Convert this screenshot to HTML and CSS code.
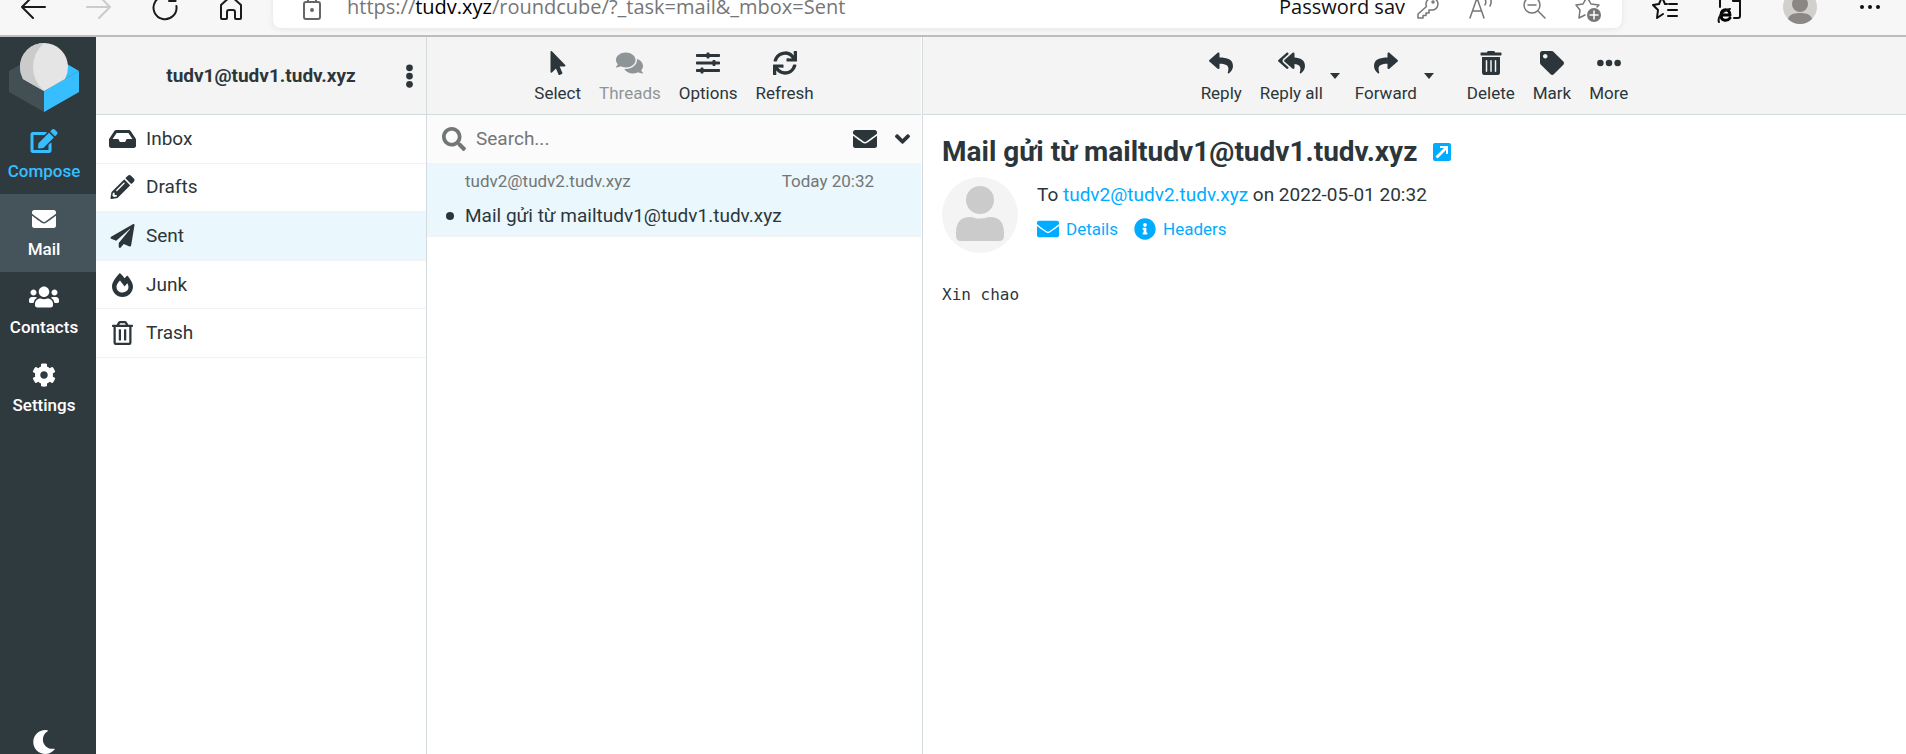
FILE: index.html
```html
<!DOCTYPE html>
<html lang="en">
<head>
<meta charset="utf-8">
<title>Mail gửi từ mailtudv1@tudv1.tudv.xyz</title>
<link rel="stylesheet" href="styles.css">
</head>
<body>
<svg class="sprite" aria-hidden="true">
  <symbol id="pointer" viewBox="0 0 320 512"><path d="M302.189 329.126H196.105l55.831 135.993c3.889 9.428-.555 19.999-9.444 23.999l-49.165 21.427c-9.165 4-19.443-.571-23.332-9.714l-53.053-129.136-86.664 89.138C18.729 472.71 0 463.554 0 447.977V18.299C0 1.899 19.921-6.096 30.277 5.443l284.412 292.542c11.472 11.179 3.007 31.141-12.5 31.141z"/></symbol>
  <symbol id="comments" viewBox="0 0 576 512"><path d="M416 192c0-88.4-93.1-160-208-160S0 103.6 0 192c0 34.3 14.1 65.9 38 92-13.4 30.2-35.5 54.2-35.8 54.5-2.2 2.3-2.8 5.7-1.5 8.7S4.8 352 8 352c36.6 0 66.9-12.3 88.7-25 32.2 15.7 70.3 25 111.3 25 114.9 0 208-71.6 208-160zm122 220c23.9-26 38-57.7 38-92 0-66.9-53.5-124.2-129.3-148.1.9 6.6 1.3 13.3 1.3 20.1 0 105.9-107.7 192-240 192-10.8 0-21.3-.8-31.7-1.9C207.8 439.6 281.8 480 368 480c41 0 79.1-9.2 111.3-25 21.8 12.7 52.1 25 88.7 25 3.2 0 6.1-1.9 7.3-4.8 1.3-2.9.7-6.3-1.5-8.7-.3-.3-22.4-24.2-35.8-54.5z"/></symbol>
  <symbol id="sliders" viewBox="0 0 512 512"><path d="M496 384H160v-16c0-8.8-7.2-16-16-16h-32c-8.800 0-16 7.200-16 16v16H16c-8.800 0-16 7.200-16 16v32c0 8.800 7.200 16 16 16h80v16c0 8.800 7.200 16 16 16h32c8.800 0 16-7.200 16-16v-16h336c8.800 0 16-7.200 16-16v-32c0-8.800-7.200-16-16-16zm0-160h-80v-16c0-8.800-7.200-16-16-16h-32c-8.800 0-16 7.200-16 16v16H16c-8.800 0-16 7.200-16 16v32c0 8.800 7.200 16 16 16h336v16c0 8.800 7.200 16 16 16h32c8.800 0 16-7.200 16-16v-16h80c8.800 0 16-7.200 16-16v-32c0-8.800-7.200-16-16-16zm0-160H288V48c0-8.800-7.200-16-16-16h-32c-8.800 0-16 7.200-16 16v16H16C7.200 64 0 71.200 0 80v32c0 8.800 7.200 16 16 16h208v16c0 8.800 7.200 16 16 16h32c8.800 0 16-7.200 16-16v-16h208c8.800 0 16-7.200 16-16V80c0-8.800-7.200-16-16-16z"/></symbol>
  <symbol id="sync" viewBox="0 0 512 512"><path d="M440.65 12.57l4 82.77A247.16 247.16 0 0 0 255.83 8C134.73 8 33.91 94.92 12.29 209.82A12 12 0 0 0 24.09 224h49.05a12 12 0 0 0 11.67-9.26 175.91 175.91 0 0 1 317-56.94l-101.46-4.86a12 12 0 0 0-12.57 12v47.41a12 12 0 0 0 12 12H500a12 12 0 0 0 12-12V12a12 12 0 0 0-12-12h-47.37a12 12 0 0 0-11.98 12.57zM255.83 432a175.61 175.61 0 0 1-146-77.8l101.8 4.87a12 12 0 0 0 12.57-12v-47.4a12 12 0 0 0-12-12H12a12 12 0 0 0-12 12V500a12 12 0 0 0 12 12h47.35a12 12 0 0 0 12-12.6l-4.15-82.57A247.17 247.17 0 0 0 255.83 504c121.11 0 221.93-86.92 243.55-201.82a12 12 0 0 0-11.8-14.18h-49.05a12 12 0 0 0-11.67 9.26A175.86 175.86 0 0 1 255.83 432z"/></symbol>
  <symbol id="reply" viewBox="0 0 512 512"><path d="M8.309 189.836L184.313 37.851C199.719 24.546 224 35.347 224 56.015v80.053c160.629 1.839 288 34.032 288 186.258 0 61.441-39.581 122.309-83.333 154.132-13.653 9.931-33.111-2.533-28.077-18.631 45.344-145.012-21.507-183.510-176.590-185.742V360c0 20.700-24.300 31.453-39.687 18.164l-176.004-152c-11.071-9.562-11.086-26.753 0-36.328z"/></symbol>
  <symbol id="reply-all" viewBox="0 0 576 512"><path d="M136.309 189.836L312.313 37.851C327.720 24.546 352 35.348 352 56.015v82.763c129.182 10.231 224 52.212 224 183.548 0 61.441-39.582 122.309-83.333 154.132-13.653 9.931-33.111-2.533-28.077-18.631 38.512-123.162-3.922-169.482-112.590-182.015v84.175c0 20.701-24.300 31.453-39.687 18.164L136.309 226.164c-11.071-9.561-11.086-26.753 0-36.328zm-128 36.328L184.313 378.150C199.700 391.439 224 380.687 224 359.986v-15.818l-108.606-93.785A55.960 55.960 0 0 1 96 207.998a55.953 55.953 0 0 1 19.393-42.380L224 71.832V56.015c0-20.667-24.280-31.469-39.687-18.164L8.309 189.836c-11.086 9.575-11.071 26.767 0 36.328z"/></symbol>
  <symbol id="forward" viewBox="0 0 512 512"><path transform="matrix(-1 0 0 1 512 0)" d="M8.309 189.836L184.313 37.851C199.719 24.546 224 35.347 224 56.015v80.053c160.629 1.839 288 34.032 288 186.258 0 61.441-39.581 122.309-83.333 154.132-13.653 9.931-33.111-2.533-28.077-18.631 45.344-145.012-21.507-183.510-176.590-185.742V360c0 20.700-24.300 31.453-39.687 18.164l-176.004-152c-11.071-9.562-11.086-26.753 0-36.328z"/></symbol>
  <symbol id="delete" viewBox="0 0 448 512"><path d="M32 464a48 48 0 0 0 48 48h288a48 48 0 0 0 48-48V128H32zm272-256a16 16 0 0 1 32 0v224a16 16 0 0 1-32 0zm-96 0a16 16 0 0 1 32 0v224a16 16 0 0 1-32 0zm-96 0a16 16 0 0 1 32 0v224a16 16 0 0 1-32 0zM432 32H312l-9.400-18.700A24 24 0 0 0 281.100 0H166.800a23.720 23.720 0 0 0-21.400 13.300L136 32H16A16 16 0 0 0 0 48v32a16 16 0 0 0 16 16h416a16 16 0 0 0 16-16V48a16 16 0 0 0-16-16z"/></symbol>
  <symbol id="tag" viewBox="0 0 512 512"><path d="M0 252.118V48C0 21.490 21.490 0 48 0h204.118a48 48 0 0 1 33.941 14.059l211.882 211.882c18.745 18.745 18.745 49.137 0 67.882L293.823 497.941c-18.745 18.745-49.137 18.745-67.882 0L14.059 286.059A48 48 0 0 1 0 252.118zM112 64c-26.510 0-48 21.490-48 48s21.490 48 48 48 48-21.490 48-48-21.490-48-48-48z"/></symbol>
  <symbol id="dots" viewBox="0 0 512 512"><circle cx="72" cy="256" r="70"/><circle cx="256" cy="256" r="70"/><circle cx="440" cy="256" r="70"/></symbol>
  <symbol id="kebab" viewBox="0 0 192 512"><circle cx="96" cy="80" r="72"/><circle cx="96" cy="256" r="72"/><circle cx="96" cy="432" r="72"/></symbol>
  <symbol id="edit" viewBox="0 0 576 512"><path d="M402.600 83.200l90.200 90.200c3.800 3.800 3.800 10 0 13.800L274.400 405.600l-92.800 10.300c-12.400 1.400-22.900-9.100-21.500-21.500l10.300-92.800L388.800 83.200c3.800-3.800 10-3.800 13.800 0zm162-22.900l-48.800-48.800c-15.200-15.200-39.900-15.200-55.200 0l-35.400 35.400c-3.800 3.800-3.800 10 0 13.800l90.200 90.200c3.800 3.800 10 3.800 13.800 0l35.400-35.400c15.200-15.300 15.200-40 0-55.200zM384 346.200V448H64V128h229.800c3.200 0 6.200-1.300 8.500-3.500l40-40c7.600-7.600 2.200-20.500-8.500-20.500H48C21.500 64 0 85.500 0 112v352c0 26.500 21.500 48 48 48h352c26.500 0 48-21.500 48-48V306.200c0-10.700-12.900-16-20.500-8.500l-40 40c-2.200 2.300-3.500 5.300-3.500 8.500z"/></symbol>
  <symbol id="envelope" viewBox="0 0 512 512"><path d="M502.300 190.800c3.900-3.100 9.700-.2 9.700 4.700V400c0 26.500-21.500 48-48 48H48c-26.500 0-48-21.500-48-48V195.600c0-5 5.700-7.800 9.700-4.700 22.400 17.400 52.100 39.500 154.100 113.600 21.100 15.400 56.700 47.800 92.200 47.600 35.700.3 72-32.800 92.300-47.600 102-74.100 131.600-96.300 154-113.700zM256 320c23.200.4 56.600-29.200 73.400-41.400 132.700-96.300 142.800-104.700 173.400-128.700 5.800-4.500 9.200-11.500 9.200-18.900v-19c0-26.500-21.500-48-48-48H48c-26.500 0-48 21.500-48 48v19c0 7.400 3.400 14.300 9.200 18.900 30.600 23.900 40.700 32.400 173.400 128.700 16.800 12.200 50.200 41.800 73.400 41.400z"/></symbol>
  <symbol id="users" viewBox="0 0 640 512"><path d="M96 224c35.300 0 64-28.700 64-64s-28.700-64-64-64-64 28.700-64 64 28.700 64 64 64zm448 0c35.300 0 64-28.700 64-64s-28.700-64-64-64-64 28.700-64 64 28.700 64 64 64zm32 32h-64c-17.600 0-33.500 7.100-45.100 18.600 40.300 22.100 68.900 62 75.100 109.400h66c17.700 0 32-14.300 32-32v-32c0-35.300-28.700-64-64-64zm-256 0c61.900 0 112-50.100 112-112S381.900 32 320 32 208 82.100 208 144s50.100 112 112 112zm76.800 32h-8.300c-20.800 10-43.900 16-68.500 16s-47.600-6-68.500-16h-8.300C179.600 288 128 339.600 128 403.200V432c0 26.500 21.500 48 48 48h288c26.500 0 48-21.500 48-48v-28.800c0-63.600-51.600-115.200-115.200-115.200zm-223.700-13.400C161.500 263.100 145.600 256 128 256H64c-35.300 0-64 28.700-64 64v32c0 17.700 14.300 32 32 32h65.900c6.300-47.400 34.900-87.300 75.200-109.400z"/></symbol>
  <symbol id="cog" viewBox="0 0 512 512"><path d="M487.400 315.700l-42.600-24.600c4.300-23.200 4.300-47 0-70.200l42.600-24.600c4.900-2.800 7.100-8.600 5.500-14-11.100-35.600-30-67.800-54.700-94.600-3.800-4.100-10-5.100-14.800-2.300L380.800 110c-17.900-15.400-38.500-27.300-60.800-35.100V25.800c0-5.600-3.900-10.500-9.400-11.700-36.700-8.200-74.300-7.800-109.200 0-5.500 1.200-9.400 6.100-9.400 11.700V75c-22.200 7.900-42.800 19.800-60.800 35.100L88.700 85.500c-4.900-2.800-11-1.900-14.800 2.300-24.700 26.700-43.600 58.900-54.700 94.600-1.700 5.400.6 11.200 5.500 14L67.300 221c-4.300 23.200-4.300 47 0 70.200l-42.600 24.600c-4.900 2.800-7.100 8.600-5.500 14 11.100 35.600 30 67.800 54.700 94.600 3.800 4.100 10 5.100 14.800 2.300l42.600-24.600c17.900 15.400 38.500 27.300 60.800 35.100v49.200c0 5.600 3.900 10.500 9.400 11.700 36.700 8.200 74.300 7.800 109.200 0 5.500-1.200 9.400-6.100 9.400-11.700v-49.200c22.200-7.900 42.800-19.800 60.800-35.100l42.600 24.600c4.900 2.800 11 1.900 14.800-2.300 24.700-26.700 43.600-58.900 54.700-94.600 1.500-5.500-.7-11.300-5.600-14.100zM256 336c-44.100 0-80-35.900-80-80s35.900-80 80-80 80 35.900 80 80-35.900 80-80 80z"/></symbol>
  <symbol id="moon" viewBox="0 0 512 512"><path d="M283.211 512c78.962 0 151.079-35.925 198.857-94.792 7.068-8.708-.639-21.430-11.562-19.350-124.203 23.654-238.262-71.576-238.262-196.954 0-72.222 38.662-138.635 101.498-174.394 9.686-5.512 7.250-20.197-3.756-22.230A258.156 258.156 0 0 0 283.211 0c-141.309 0-256 114.511-256 256 0 141.309 114.511 256 256 256z"/></symbol>
  <symbol id="inbox" viewBox="0 0 576 512"><path d="M567.938 243.908L462.250 85.374A48.003 48.003 0 0 0 422.311 64H153.689a48 48 0 0 0-39.938 21.374L8.062 243.908A47.994 47.994 0 0 0 0 270.533V400c0 26.510 21.490 48 48 48h480c26.510 0 48-21.490 48-48V270.533a47.994 47.994 0 0 0-8.062-26.625zM162.252 128h251.497l85.333 128H376l-32 64H232l-32-64H76.918l85.334-128z"/></symbol>
  <symbol id="pencil" viewBox="0 0 512 512"><path d="M497.900 142.100l-46.100 46.100c-4.700 4.700-12.300 4.700-17 0l-111-111c-4.700-4.700-4.700-12.300 0-17l46.100-46.100c18.700-18.700 49.100-18.700 67.900 0l60.100 60.100c18.800 18.700 18.800 49.100 0 67.900zM284.200 99.800L21.600 362.400.4 483.900c-2.900 16.400 11.400 30.600 27.800 27.800l121.500-21.300 262.600-262.600c4.700-4.700 4.700-12.300 0-17l-111-111c-4.800-4.700-12.400-4.700-17.100 0zM124.100 339.900c-5.500-5.500-5.500-14.300 0-19.800l154-154c5.500-5.500 14.300-5.500 19.800 0s5.500 14.300 0 19.800l-154 154c-5.500 5.500-14.300 5.500-19.800 0zM88 424h48v36.300l-64.500 11.300-31.100-31.100L51.700 376H88v48z"/></symbol>
  <symbol id="plane" viewBox="0 0 512 512"><path d="M476 3.200L12.500 270.600c-18.100 10.400-15.800 35.600 2.200 43.200L121 358.400l287.300-253.200c5.500-4.900 13.300 2.600 8.600 8.300L176 407v80.500c0 23.600 28.500 32.900 42.500 15.800L282 426l124.600 52.200c14.200 6 30.400-2.900 33-18.200l72-432C515 7.800 493.300-6.800 476 3.200z"/></symbol>
  <symbol id="fire" viewBox="0 0 448 512"><path d="M323.560 51.200c-20.800 19.300-39.580 39.590-56.220 59.970C240.080 73.620 206.280 35.530 168 0 69.740 91.170 0 209.960 0 281.600 0 408.850 100.290 512 224 512s224-103.150 224-230.400c0-53.270-51.980-163.140-124.440-230.400zm-19.470 340.650C282.430 407.010 255.720 416 226.860 416 154.710 416 96 368.260 96 290.750c0-38.610 24.310-72.630 72.790-130.750 6.930 7.980 98.830 125.340 98.830 125.340l58.630-66.880c4.140 6.850 7.910 13.550 11.270 19.970 27.350 52.190 15.810 118.970-33.430 153.420z"/></symbol>
  <symbol id="bin" viewBox="0 0 448 512"><path d="M268 416h24a12 12 0 0 0 12-12V188a12 12 0 0 0-12-12h-24a12 12 0 0 0-12 12v216a12 12 0 0 0 12 12zM432 80h-82.410l-34-56.700A48 48 0 0 0 274.410 0H173.590a48 48 0 0 0-41.160 23.300L98.410 80H16A16 16 0 0 0 0 96v16a16 16 0 0 0 16 16h16v336a48 48 0 0 0 48 48h288a48 48 0 0 0 48-48V128h16a16 16 0 0 0 16-16V96a16 16 0 0 0-16-16zM171.840 50.910A6 6 0 0 1 177 48h94a6 6 0 0 1 5.150 2.910L293.610 80H154.390zM368 464H80V128h288zm-212-48h24a12 12 0 0 0 12-12V188a12 12 0 0 0-12-12h-24a12 12 0 0 0-12 12v216a12 12 0 0 0 12 12z"/></symbol>
  <symbol id="search" viewBox="0 0 512 512"><path d="M505 442.700L405.300 343c-4.500-4.500-10.600-7-17-7H372c27.600-35.300 44-79.700 44-128C416 93.100 322.900 0 208 0S0 93.100 0 208s93.100 208 208 208c48.300 0 92.700-16.400 128-44v16.300c0 6.400 2.500 12.500 7 17l99.700 99.700c9.400 9.400 24.600 9.400 33.900 0l28.300-28.300c9.400-9.400 9.400-24.600.1-34zM208 336c-70.700 0-128-57.200-128-128 0-70.700 57.200-128 128-128 70.700 0 128 57.200 128 128 0 70.700-57.200 128-128 128z"/></symbol>
  <symbol id="angle" viewBox="0 0 320 512"><path d="M143 352.300L7 216.300c-9.400-9.400-9.400-24.600 0-33.900l22.600-22.600c9.400-9.400 24.600-9.400 33.900 0l96.400 96.400 96.400-96.400c9.400-9.400 24.600-9.400 33.900 0l22.600 22.600c9.400 9.400 9.400 24.600 0 33.900l-136 136c-9.200 9.400-24.400 9.400-33.800 0z"/></symbol>
  <symbol id="info" viewBox="0 0 512 512"><path d="M256 8C119.043 8 8 119.083 8 256c0 136.997 111.043 248 248 248s248-111.003 248-248C504 119.083 392.957 8 256 8zm0 110c23.196 0 42 18.804 42 42s-18.804 42-42 42-42-18.804-42-42 18.804-42 42-42zm56 254c0 6.627-5.373 12-12 12h-88c-6.627 0-12-5.373-12-12v-24c0-6.627 5.373-12 12-12h12v-64h-12c-6.627 0-12-5.373-12-12v-24c0-6.627 5.373-12 12-12h64c6.627 0 12 5.373 12 12v100h12c6.627 0 12 5.373 12 12v24z"/></symbol>
</svg>

<header class="browser">
  <div class="browser-bar">
    <nav class="nav-buttons" aria-label="Browser">
      <button class="tool" aria-label="Back"><svg class="icon line" viewBox="0 0 24 24"><path d="M24 12H1M12 1L1 12l11 11"/></svg></button>
      <button class="tool off" aria-label="Forward"><svg class="icon line" viewBox="0 0 24 24"><path d="M0 12h23M12 1l11 11-11 11"/></svg></button>
      <button class="tool" aria-label="Reload"><svg class="icon line" viewBox="0 0 24 24"><path d="M21 5.500A11.500 11.500 0 1 0 23.400 11M22.500 0v6H16"/></svg></button>
      <button class="tool" aria-label="Home"><svg class="icon line" viewBox="0 0 24 24"><path d="M2 10L12 1l10 9v13a1 1 0 0 1-1 1h-4a1 1 0 0 1-1-1v-6a2 2 0 0 0-2-2h-4a2 2 0 0 0-2 2v6a1 1 0 0 1-1 1H3a1 1 0 0 1-1-1z"/></svg></button>
    </nav>
    <div class="address">
      <svg class="lock" viewBox="0 0 18 28"><rect x="1" y="9" width="16" height="17" rx="2"/><path d="M5 9V5a4 4 0 0 1 8 0v4"/><circle cx="9" cy="17" r="1"/></svg>
      <div class="url">https://<b>tudv.xyz</b>/roundcube/?_task=mail&amp;_mbox=Sent</div>
      <div class="address-tools">
        <button class="tool password">Password sav</button>
        <div class="tool-row">
          <button class="tool" aria-label="Passwords"><svg class="icon fine" viewBox="0 0 24 24"><path d="M9.500 11.500A6 6 0 1 1 14 15h-2v3H9v2.500H6V23H1v-4z"/><circle cx="16" cy="7" r="1"/></svg></button>
          <button class="tool" aria-label="Read aloud"><svg class="icon fine" viewBox="0 0 24 24"><path d="M0 23L7 3 14 23M3 16h8M14 3q3 3 1 7M18 0q5 6 2 11"/></svg></button>
          <button class="tool" aria-label="Zoom out"><svg class="icon fine" viewBox="0 0 24 24"><circle cx="9" cy="10" r="8"/><path d="M15 16l7 7M5 10h8"/></svg></button>
          <button class="tool" aria-label="Add favourite"><svg class="icon fine" viewBox="0 0 24 24"><path d="M9 20l-6 3 1-8-4-5 7-1 4-7 4 7 8 1-2 2"/><circle class="disc" cx="18" cy="20" r="7"/><path class="plus" d="M18 16v8M14 20h8"/></svg></button>
        </div>
      </div>
    </div>
    <div class="browser-tools">
      <button class="tool" aria-label="Favourites"><svg class="icon line" viewBox="0 0 24 24"><path d="M14 9l-2 0-3-7-3 7-6 1 5 5-1 8 6-4M16 9h8M15 15h9M15 21h9"/></svg></button>
      <button class="tool" aria-label="Internet Explorer mode"><svg class="icon line" viewBox="0 0 24 24"><path d="M2 12V3h20v18a2 2 0 0 1-2 2h-4M15 2v4h7"/><path class="ie" d="M3 20h9c0-7-9-7-9 0s7 6 9 3"/><path d="M1 27c-2-4 4-12 11-13"/></svg></button>
      <button class="tool profile" aria-label="Profile"><svg class="face" viewBox="0 0 34 34"><circle cx="17" cy="17" r="17" fill="#d2d0cc"/><circle cx="17" cy="14" r="8" fill="#8b8784"/><path d="M5 29c1-4 5-6 12-6s11 2 12 6q-5 5-12 5T5 29z" fill="#8b8784"/></svg></button>
      <button class="tool" aria-label="Menu"><svg class="icon" viewBox="0 0 24 24"><circle cx="4" cy="12" r="2"/><circle cx="12" cy="12" r="2"/><circle cx="20" cy="12" r="2"/></svg></button>
    </div>
  </div>
</header>

<div class="app">
  <nav class="tasks" aria-label="Tasks">
    <svg class="logo" viewBox="0 0 70 70">
      <path d="M0 28l14-8 42 0 14 8v21L35 69 0 49z" fill="#424f54"/>
      <path d="M35 48l35-20v21L35 69z" fill="#37beff"/>
      <path d="M35 48l22-20 1-7 12 7z" fill="#37beff"/>
      <path d="M35 0a24 24 0 0 0-24 24q0 6 3 12l21 12 21-12q3-6 3-12A24 24 0 0 0 35 0z" fill="#e5e5e5"/>
      <path d="M35 0a24 24 0 0 0-24 24q0 6 3 12l21 12Q24 38 24 24T35 0z" fill="#cbcbcb"/>
    </svg>
    <a class="task compose" href="#"><svg class="icon"><use href="#edit"/></svg>Compose</a>
    <a class="task selected" href="#"><svg class="icon"><use href="#envelope"/></svg>Mail</a>
    <a class="task" href="#"><svg class="icon"><use href="#users"/></svg>Contacts</a>
    <a class="task" href="#"><svg class="icon"><use href="#cog"/></svg>Settings</a>
    <a class="theme" href="#" aria-label="Dark mode"><svg class="icon"><use href="#moon"/></svg></a>
  </nav>

  <section class="folders">
    <div class="bar account">
      <span class="username">tudv1@tudv1.tudv.xyz</span>
      <button class="plain" aria-label="Folder actions"><svg class="icon narrow"><use href="#kebab"/></svg></button>
    </div>
    <ul class="folder-list">
      <li><a class="folder" href="#"><svg class="icon"><use href="#inbox"/></svg>Inbox</a></li>
      <li><a class="folder" href="#"><svg class="icon"><use href="#pencil"/></svg>Drafts</a></li>
      <li><a class="folder current" href="#"><svg class="icon"><use href="#plane"/></svg>Sent</a></li>
      <li><a class="folder" href="#"><svg class="icon"><use href="#fire"/></svg>Junk</a></li>
      <li><a class="folder" href="#"><svg class="icon"><use href="#bin"/></svg>Trash</a></li>
    </ul>
  </section>

  <section class="messages">
    <div class="bar toolbar">
      <button class="action"><svg class="icon"><use href="#pointer"/></svg>Select</button>
      <button class="action" disabled><svg class="icon wide"><use href="#comments"/></svg>Threads</button>
      <button class="action"><svg class="icon"><use href="#sliders"/></svg>Options</button>
      <button class="action"><svg class="icon"><use href="#sync"/></svg>Refresh</button>
    </div>
    <form class="search">
      <label class="search-label" for="q" aria-label="Search"><svg class="icon"><use href="#search"/></svg></label>
      <input class="search-box" id="q" type="text" placeholder="Search...">
      <button class="plain" type="button" aria-label="Unread"><svg class="icon"><use href="#envelope"/></svg></button>
      <button class="plain" type="button" aria-label="Search options"><svg class="icon narrow"><use href="#angle"/></svg></button>
    </form>
    <article class="message">
      <div class="message-meta"><span>tudv2@tudv2.tudv.xyz</span><time>Today 20:32</time></div>
      <a class="message-subject" href="#"><i class="dot"></i>Mail gửi từ mailtudv1@tudv1.tudv.xyz</a>
    </article>
  </section>

  <main class="reader">
    <div class="bar toolbar">
      <button class="action"><svg class="icon"><use href="#reply"/></svg>Reply</button>
      <button class="action"><svg class="icon wide"><use href="#reply-all"/></svg>Reply all</button>
      <button class="caret" aria-label="Reply options"></button>
      <button class="action"><svg class="icon"><use href="#forward"/></svg>Forward</button>
      <button class="caret" aria-label="Forward options"></button>
      <span class="spacer"></span>
      <button class="action"><svg class="icon"><use href="#delete"/></svg>Delete</button>
      <button class="action"><svg class="icon"><use href="#tag"/></svg>Mark</button>
      <button class="action"><svg class="icon"><use href="#dots"/></svg>More</button>
    </div>
    <article class="mail">
      <h1 class="subject">Mail gửi từ mailtudv1@tudv1.tudv.xyz
        <a class="open" href="#" aria-label="Open in new window"><svg class="open-icon" viewBox="0 0 18 18"><rect width="18" height="18" rx="2" fill="currentColor"/><path d="M2.500 13.500L11 5H7V3h8v8h-2V7l-8.500 8.500z" fill="#fff"/></svg></a>
      </h1>
      <div class="envelope">
        <svg class="avatar" viewBox="0 0 76 76"><circle cx="38" cy="38" r="38" fill="#f4f4f4"/><circle cx="38" cy="23" r="14" fill="#cbcbcb"/><path d="M14 56q0-16 14-16 3 0 5 1t10 0q2-1 5-1 14 0 14 16v3q0 5-5 5H19q-5 0-5-5z" fill="#cbcbcb"/></svg>
        <div class="headers">
          <p class="recipient">To <a href="#">tudv2@tudv2.tudv.xyz</a> on 2022-05-01 20:32</p>
          <div class="links">
            <a class="link" href="#"><svg class="icon small"><use href="#envelope"/></svg>Details</a>
            <a class="link" href="#"><svg class="icon small"><use href="#info"/></svg>Headers</a>
          </div>
        </div>
      </div>
      <pre class="body">Xin chao</pre>
    </article>
  </main>
</div>
</body>
</html>
```

FILE: styles.css
```css
* { box-sizing: border-box; }

body {
  margin: 0;
  height: 100vh;
  display: flex;
  flex-direction: column;
  overflow: hidden;
  font: 19px/24px Roboto, "Open Sans", sans-serif;
  color: #2c363a;
  background: #fff;
}

.sprite { display: none; }
.icon { width: 24px; height: 24px; fill: currentColor; flex: none; overflow: visible; }
.icon.wide { width: 27px; }
.icon.narrow { width: 15px; }
.icon.small { width: 22px; height: 22px; }
.line, .fine { fill: none; stroke: currentColor; stroke-width: 2; stroke-linejoin: round; stroke-linecap: round; }
.fine { stroke-width: 1.5; }

button { font: inherit; color: inherit; background: none; border: 0; padding: 0; }
a { color: #00acff; text-decoration: none; }

/* Browser toolbar */
.browser {
  height: 37px;
  flex: none;
  overflow: hidden;
  background: #f7f7f7;
  border-bottom: 2px solid #bdbdbd;
}
.browser-bar {
  height: 56px;
  margin-top: -21px;
  padding: 0 24px 0 21px;
  display: flex;
  align-items: center;
}
.nav-buttons { display: flex; gap: 42px; color: #1b1b1b; }
.tool { display: flex; }
.off { color: #ccc; }
.address {
  flex: 1;
  height: 42px;
  margin: 0 31px 0 30px;
  padding: 0 22px 0 30px;
  display: flex;
  align-items: center;
  border-radius: 8px;
  background: #fff;
  box-shadow: 0 1px 6px #e4e4e4;
  color: #767676;
  font: 20px/28px "Open Sans", "Noto Sans", sans-serif;
}
.lock { width: 18px; height: 28px; fill: none; stroke: #666; stroke-width: 2; }
.url { flex: 1; margin-left: 26px; }
.url b { font-weight: 400; color: #000; }
.address-tools { display: flex; align-items: center; gap: 12px; }
.password { color: #111; }
.tool-row { display: flex; gap: 29px; }
.disc { fill: #767676; stroke: none; }
.plus { stroke: #fff; }
.ie { stroke: #000; stroke-width: 3; }
.browser-tools { display: flex; align-items: center; gap: 41px; color: #111; }
.face { width: 34px; height: 34px; }

/* Mail client */
.app {
  flex: 1;
  min-height: 0;
  display: grid;
  grid-template-columns: 96px 331px 496px 1fr;
}

.tasks {
  display: flex;
  flex-direction: column;
  background: #2f3a3f;
  font-size: 17px;
  font-weight: 500;
  line-height: 24px;
}
.logo { width: 70px; height: 70px; margin: 6px 9px 3px; flex: none; }
.task {
  height: 78px;
  padding: 13px 8px 0 0;
  display: flex;
  flex-direction: column;
  align-items: center;
  gap: 6px;
  color: #fff;
}
.task .icon { width: 30px; }
.compose { color: #37beff; }
.selected { background: #44545a; }
.theme { margin: auto 8px 0 0; display: flex; justify-content: center; color: #fff; }

.bar {
  height: 78px;
  display: flex;
  justify-content: center;
  align-items: center;
  background: #f4f4f4;
  border-bottom: 1px solid #d4dbde;
}
.toolbar { padding-top: 4px; }
.plain { display: flex; }

.folders { border-right: 1px solid #d4dbde; }
.account { padding: 0 9px 0 24px; }
.username { flex: 1; text-align: center; font-weight: 700; }
.folder-list {
  height: 243px;
  margin: 0;
  padding: 0;
  display: grid;
  grid-auto-rows: 1fr;
  list-style: none;
}
.folder {
  height: 100%;
  padding-left: 13px;
  display: flex;
  align-items: center;
  gap: 10px;
  color: inherit;
  border-bottom: 1px solid #f1f3f4;
}
.folder .icon { width: 27px; }
.current { background: #eaf7fd; }

.messages { padding-right: 1px; border-right: 1px solid #d4dbde; }
.action {
  padding: 0 9px;
  display: flex;
  flex-direction: column;
  align-items: center;
  gap: 6px;
  font-size: 17px;
}
.action:disabled { opacity: .5; color: inherit; }
.search {
  height: 48px;
  padding: 0 11px 0 15px;
  display: flex;
  align-items: center;
  gap: 18px;
  background: #fbfbfb;
}
.search-label { display: flex; color: #737677; }
.search-box {
  flex: 1;
  min-width: 0;
  margin-left: -8px;
  padding: 0;
  border: 0;
  outline: 0;
  background: none;
  font: inherit;
}
.search-box::placeholder { color: #737677; }
.message {
  padding: 6px 47px 8px 38px;
  background: #eaf7fd;
  border-bottom: 1px solid #f1f3f4;
}
.message-meta {
  display: flex;
  justify-content: space-between;
  margin-bottom: 11px;
  font-size: 17px;
  color: #737677;
}
.message-subject { position: relative; display: block; color: inherit; }
.dot {
  position: absolute;
  left: -19px;
  top: 8px;
  width: 8px;
  height: 8px;
  border-radius: 50%;
  background: currentColor;
}

.caret { height: 9px; margin: 0 6px 0 -2px; }
.caret::before {
  content: "";
  display: block;
  margin-bottom: 3px;
  border: 5px solid transparent;
  border-top: 6px solid #2c363a;
  border-bottom: 0;
}
.spacer { width: 18px; }

.mail { padding: 20px 19px; }
.subject {
  margin: 0;
  display: flex;
  align-items: center;
  gap: 16px;
  font-size: 28px;
  font-weight: 700;
  line-height: 34px;
}
.open { display: flex; }
.open-icon { width: 18px; height: 18px; }
.envelope { margin-top: 8px; display: flex; gap: 19px; }
.avatar { width: 76px; height: 76px; }
.recipient { margin: 6px 0 10px; }
.links { display: flex; gap: 16px; font-size: 17px; }
.link { display: flex; align-items: center; gap: 7px; }
.body {
  margin: 30px 0 0;
  font: 16px/24px "DejaVu Sans Mono", "Liberation Mono", monospace;
}
```
